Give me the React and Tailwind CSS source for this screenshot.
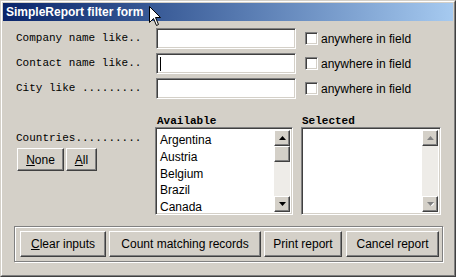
import React from 'react';

const raised = "border border-t-white border-l-white border-r-[#404040] border-b-[#404040] shadow-[inset_-1px_-1px_0_#808080]";
const sunken = "border border-t-[#808080] border-l-[#808080] border-r-white border-b-white shadow-[inset_1px_1px_0_#404040,inset_-1px_-1px_0_#d4d0c8]";
const mono = { fontFamily: '"Liberation Mono", "Courier New", monospace' };
const sans = { fontFamily: '"Liberation Sans", Arial, sans-serif' };

const Arrow = ({ down, disabled }) => (
  <div className={`w-[16px] h-[16px] bg-[#d4d0c8] flex items-center justify-center ${raised}`}>
    <svg width="7" height="4" viewBox="0 0 7 4">
      {disabled && <path d={down ? "M1 1h7L4.5 4.5z" : "M1 5h7L4.5 1.5z"} fill="#fff" />}
      <path d={down ? "M0 0h7L3.5 4z" : "M0 4h7L3.5 0z"} fill={disabled ? "#808080" : "#000"} />
    </svg>
  </div>
);

const Scrollbar = ({ disabled }) => (
  <div className="w-[16px] h-full flex flex-col bg-[#eeece8]">
    <Arrow disabled={disabled} />
    {!disabled && <div className={`w-[16px] h-[16px] bg-[#d4d0c8] ${raised}`} />}
    <div className="flex-1" />
    <Arrow down disabled={disabled} />
  </div>
);

const Checkbox = () => (
  <div className={`w-[13px] h-[13px] bg-white ${sunken}`} />
);

const Row = ({ label, cursor }) => (
  <div className="flex items-center h-[21px] mb-[4px]">
    <div className="w-[140px] text-[11px] leading-[11px] text-black whitespace-pre" style={mono}>{label}</div>
    <div className={`w-[140px] h-[21px] bg-white flex items-center ${sunken}`}>
      {cursor && <div className="ml-[3px] w-[1px] h-[14px] bg-black" />}
    </div>
    <div className="ml-[9px]"><Checkbox /></div>
    <div className="ml-[3px] text-[12px] text-black" style={sans}>anywhere in field</div>
  </div>
);

const Btn = ({ w, h = 'h-[26px]', children, className = '' }) => (
  <button className={`${w} ${h} bg-[#d4d0c8] text-[12px] text-black flex items-center justify-center ${raised} ${className}`} style={sans}>
    {children}
  </button>
);

export default function App() {
  const countries = ['Argentina', 'Austria', 'Belgium', 'Brazil', 'Canada'];
  return (
    <div className="w-[456px] h-[277px] relative overflow-hidden bg-[#d4d0c8] border border-t-[#d4d0c8] border-l-[#d4d0c8] border-r-[#404040] border-b-[#404040]">
      <div className="w-full h-full border border-t-white border-l-white border-r-[#808080] border-b-[#808080] p-[1px]">
        <div className="h-[18px] bg-gradient-to-r from-[#0a246a] to-[#a6caf0] flex items-center pl-[3px]">
          <span className="text-white font-bold text-[12px]" style={sans}>SimpleReport filter form</span>
        </div>

        <div className="pl-[13px] pt-[7px]">
          <Row label="Company name like.." />
          <Row label="Contact name like.." cursor />
          <Row label="City like ........." />
        </div>

        <div className="flex pl-[13px] mt-[17px]">
          <div className="w-[139px] pt-[17px]">
            <div className="text-[11px] leading-[11px] text-black" style={mono}>Countries..........</div>
            <div className="flex gap-[2px] mt-[4px] ml-[1px]">
              <Btn w="w-[47px]" h="h-[23px]"><span><u>N</u>one</span></Btn>
              <Btn w="w-[31px]" h="h-[23px]"><span><u>A</u>ll</span></Btn>
            </div>
          </div>
          <div className="w-[138px]">
            <div className="h-[11px] text-[11px] leading-[11px] font-bold text-black pl-[2px]" style={mono}>Available</div>
            <div className={`w-[138px] h-[88px] bg-white flex p-[2px] ${sunken}`}>
              <div className="flex-1 pl-[2px] pt-[2px]">
                {countries.map((c) => (
                  <div key={c} className="h-[16.75px] leading-[16.75px] text-[12px] text-black" style={sans}>{c}</div>
                ))}
              </div>
              <Scrollbar />
            </div>
          </div>
          <div className="w-[140px] ml-[8px]">
            <div className="h-[11px] text-[11px] leading-[11px] font-bold text-black pl-[1px]" style={mono}>Selected</div>
            <div className={`w-[140px] h-[88px] bg-white flex justify-end p-[2px] ${sunken}`}>
              <Scrollbar disabled />
            </div>
          </div>
        </div>

        <div className="ml-[11px] mt-[11px] w-[429px] h-[36px] border border-[#808080] shadow-[inset_1px_1px_0_#fff,1px_1px_0_#fff] flex items-center pl-[5px]">
          <Btn w="w-[86px]"><span><u>C</u>lear inputs</span></Btn>
          <Btn w="w-[152px]" className="ml-[3px]">Count matching records</Btn>
          <Btn w="w-[78px]" className="ml-[3px]">Print report</Btn>
          <Btn w="w-[93px]" className="ml-[4px]">Cancel report</Btn>
        </div>
      </div>

      <svg className="absolute left-[148px] top-[5px]" width="13" height="21" viewBox="0 0 13 21">
        <path d="M0.5 0.5 L0.5 16.5 L4.5 12.5 L7.5 19.5 L9.5 18.5 L6.5 11.5 L11.5 11.5 Z" fill="#fff" stroke="#000" strokeWidth="1" />
      </svg>
    </div>
  );
}
